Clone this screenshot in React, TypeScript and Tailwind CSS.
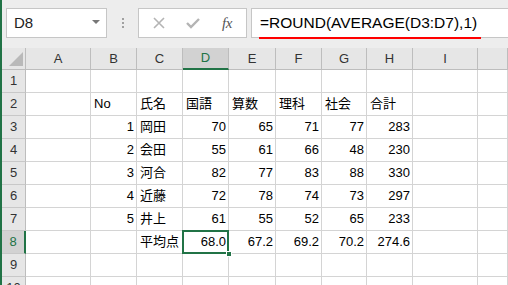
import React from "react";

const cols = ["A", "B", "C", "D", "E", "F", "G", "H", "I", ""];

type Row = (string | null)[];

// B..H contents for rows 1-10 (A, I, J stay empty)
const rows: Row[] = [
  [null, null, null, null, null, null, null],
  ["No", "氏名", "国語", "算数", "理科", "社会", "合計"],
  ["1", "岡田", "70", "65", "71", "77", "283"],
  ["2", "会田", "55", "61", "66", "48", "230"],
  ["3", "河合", "82", "77", "83", "88", "330"],
  ["4", "近藤", "72", "78", "74", "73", "297"],
  ["5", "井上", "61", "55", "52", "65", "233"],
  [null, "平均点", "68.0", "67.2", "69.2", "70.2", "274.6"],
  [null, null, null, null, null, null, null],
  [null, null, null, null, null, null, null],
];

const font = "font-['Liberation_Sans','Noto_Sans_CJK_JP',sans-serif]";

function Cell({ value, rowIdx, colIdx }: { value: string | null; rowIdx: number; colIdx: number }) {
  const isHeaderText = rowIdx === 1;
  const isTextCol = colIdx === 2; // C
  const alignLeft = isHeaderText || isTextCol;
  const selected = rowIdx === 7 && colIdx === 3;
  return (
    <div
      className={`relative h-[23px] border-r border-b border-[#d4d4d4] bg-white flex items-center text-[13px] text-black overflow-visible whitespace-nowrap ${
        alignLeft ? "justify-start pl-[3px]" : "justify-end pr-[2px]"
      } ${selected ? "z-10" : ""}`}
    >
      {value}
      {selected && (
        <>
          <div className="absolute -left-[1px] -top-[1px] -right-[1px] -bottom-[1px] border-2 border-[#217346] pointer-events-none" />
          <div className="absolute -right-[4px] -bottom-[4px] w-[6px] h-[6px] bg-[#217346] border border-white" />
        </>
      )}
    </div>
  );
}

export default function App() {
  return (
    <div className={`w-[508px] h-[285px] overflow-hidden bg-[#ededed] border-l-2 border-[#217346] flex flex-col ${font}`}>
      {/* formula bar */}
      <div className="h-[48px] shrink-0 flex items-start pt-[8px] pl-[4px]">
        <div className="w-[101px] h-[30px] bg-white border border-[#c6c6c6] flex items-center justify-between pl-[7px] pr-[6px]">
          <span className="text-[15px] text-[#222]">D8</span>
          <span className="w-0 h-0 border-l-[4px] border-r-[4px] border-t-[4px] border-l-transparent border-r-transparent border-t-[#777] mb-[2px]" />
        </div>
        <div className="w-[31px] h-[30px] flex flex-col items-center justify-center gap-[2px]">
          <span className="w-[2px] h-[2px] bg-[#a0a0a0]" />
          <span className="w-[2px] h-[2px] bg-[#a0a0a0]" />
          <span className="w-[2px] h-[2px] bg-[#a0a0a0]" />
        </div>
        <div className="w-[109px] h-[30px] bg-white border border-[#c6c6c6] flex items-center">
          <svg width="14" height="14" viewBox="0 0 14 14" className="ml-[13px]">
            <path d="M2 2 L12 12 M12 2 L2 12" stroke="#b4b4b4" strokeWidth="1.6" />
          </svg>
          <svg width="16" height="14" viewBox="0 0 16 14" className="ml-[19px]">
            <path d="M2 7 L6 11 L14 3" stroke="#b4b4b4" strokeWidth="2.4" fill="none" />
          </svg>
          <span className="ml-[21px] text-[15px] italic text-[#555] font-['Liberation_Serif',serif] tracking-[-0.5px]">fx</span>
        </div>
        <div className="flex-1 h-[30px] ml-[4px] -mr-[4px] bg-white border border-[#c6c6c6] flex items-center pl-[8px]">
          <span className="relative text-[15.5px] text-black whitespace-nowrap">
            =ROUND(AVERAGE(D3:D7),1)
            <span className="absolute -left-[1px] -right-[4px] bottom-[-4px] h-[2px] bg-[#ff0000]" />
          </span>
        </div>
      </div>

      {/* sheet */}
      <div className="grid grid-cols-[24px_65px_46px_46px_46px_47px_46px_45px_46px_65px_1fr] text-[13px]">
        {/* corner */}
        <div className="relative h-[22px] bg-[#e6e6e6] border-r border-b border-[#bdbdbd]">
          <svg width="14" height="14" viewBox="0 0 14 14" className="absolute right-[2px] bottom-[3px]">
            <path d="M14 0 L14 14 L0 14 Z" fill="#b9b9b9" />
          </svg>
        </div>
        {cols.map((c, i) => (
          <div
            key={c + i}
            className={`h-[22px] flex items-center justify-center ${
              c === "D"
                ? "bg-[#d2d2d2] text-[#217346] border-r border-[#bdbdbd] border-b-2 border-b-[#217346]"
                : "bg-[#e6e6e6] text-[#333] border-r border-b border-[#bdbdbd]"
            }`}
          >
            {c}
          </div>
        ))}

        {rows.map((r, ri) => (
          <React.Fragment key={ri}>
            <div
              className={`h-[23px] flex items-center justify-center border-b border-[#c8c8c8] ${
                ri === 7
                  ? "bg-[#d2d2d2] text-[#217346] border-r-2 border-r-[#217346]"
                  : "bg-[#e6e6e6] text-[#333] border-r border-r-[#bdbdbd]"
              }`}
            >
              {ri + 1}
            </div>
            <Cell value={null} rowIdx={ri} colIdx={0} />
            {r.map((v, ci) => (
              <Cell key={ci} value={v} rowIdx={ri} colIdx={ci + 1} />
            ))}
            <Cell value={null} rowIdx={ri} colIdx={8} />
            <Cell value={null} rowIdx={ri} colIdx={9} />
          </React.Fragment>
        ))}
      </div>
    </div>
  );
}
